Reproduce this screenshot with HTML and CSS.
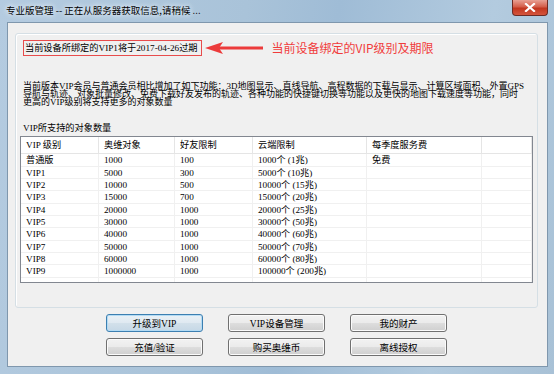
FILE: index.html
```html
<!DOCTYPE html>
<html>
<head>
	<title>专业版管理</title>
	<link rel="stylesheet" href="styles.css">
</head>
<body>
	<div class="window">
		<div class="titlebar">
			<span class="title">专业版管理 -- 正在从服务器获取信息,请稍候 ...</span>
			<div class="close">
				<svg width="12" height="9" viewBox="0 0 12 9"><path d="M2 1 L10 8 M10 1 L2 8" stroke="#fff" stroke-width="2.2" stroke-linecap="square"/></svg>
			</div>
		</div>
		<div class="client">
			<div class="group">
				<div class="notice-row">
					<div class="expiry">当前设备所绑定的VIP1将于2017-04-26过期</div>
					<svg class="arrow" width="60" height="14" viewBox="0 0 60 14">
						<path d="M14 5.6 L59 5.6 L59 8.4 L14 8.4 Z" fill="#ec3b3b"/>
						<path d="M1 7 L19 1 L15 7 L19 13 Z" fill="#ec3b3b"/>
					</svg>
					<span class="callout">当前设备绑定的VIP级别及期限</span>
				</div>
				<p class="features">
					<span>当前版本VIP会员与普通会员相比增加了如下功能：3D地图显示、直线导航、高程数据的下载与显示、计算区域面积、外置GPS</span>
					<span>导航与轨迹、对象批量修改、免费下载好友发布的轨迹、各种功能的快捷键切换等功能以及更快的地图下载速度等功能，同时</span>
					<span>更高的VIP级别将支持更多的对象数量</span>
				</p>
				<div class="caption">VIP所支持的对象数量</div>
				<div class="listview">
					<div class="row head">
						<div>VIP 级别</div><div>奥维对象</div><div>好友限制</div><div>云端限制</div><div>每季度服务费</div><div></div>
					</div>
					<div class="row"><div>普通版</div><div>1000</div><div>100</div><div>1000个 (1兆)</div><div>免费</div><div></div></div>
					<div class="row"><div>VIP1</div><div>5000</div><div>300</div><div>5000个 (10兆)</div><div></div><div></div></div>
					<div class="row"><div>VIP2</div><div>10000</div><div>500</div><div>10000个 (15兆)</div><div></div><div></div></div>
					<div class="row"><div>VIP3</div><div>15000</div><div>700</div><div>15000个 (20兆)</div><div></div><div></div></div>
					<div class="row"><div>VIP4</div><div>20000</div><div>1000</div><div>20000个 (25兆)</div><div></div><div></div></div>
					<div class="row"><div>VIP5</div><div>30000</div><div>1000</div><div>30000个 (50兆)</div><div></div><div></div></div>
					<div class="row"><div>VIP6</div><div>40000</div><div>1000</div><div>40000个 (60兆)</div><div></div><div></div></div>
					<div class="row"><div>VIP7</div><div>50000</div><div>1000</div><div>50000个 (70兆)</div><div></div><div></div></div>
					<div class="row"><div>VIP8</div><div>60000</div><div>1000</div><div>60000个 (80兆)</div><div></div><div></div></div>
					<div class="row"><div>VIP9</div><div>1000000</div><div>1000</div><div>100000个 (200兆)</div><div></div><div></div></div>
					<div class="row blank"><div></div><div></div><div></div><div></div><div></div><div></div></div>
				</div>
			</div>
			<div class="buttons">
				<button class="default">升级到VIP</button>
				<button>VIP设备管理</button>
				<button>我的财产</button>
				<button>充值/验证</button>
				<button>购买奥维币</button>
				<button>离线授权</button>
			</div>
		</div>
	</div>
</body>
</html>
```
FILE: styles.css
```css
body {
	margin: 0;
	font-family: "Liberation Serif", "Noto Sans CJK SC", serif;
	font-size: 9.2px;
	color: #000;
}

.window {
	width: 554px;
	height: 374px;
	box-sizing: border-box;
	padding: 0 6px 7px 7px;
	background: linear-gradient(100deg, #b4cbe0 0%, #a9c3d9 40%, #9fbcd6 55%, #b3cbdf 80%, #a8c1d6 100%);
	display: flex;
	flex-direction: column;
}

.titlebar {
	height: 22px;
	display: flex;
	align-items: flex-start;
	justify-content: space-between;
	margin-left: -1px;
}

.title {
	font-family: "Noto Sans CJK SC", sans-serif;
	font-size: 9.5px;
	line-height: 12px;
	margin-top: 4px;
	text-shadow: 0 0 4px #e8f0f8, 0 0 6px #e8f0f8;
}

.close {
	width: 36px;
	height: 16px;
	box-sizing: border-box;
	border: 1px solid #6d2b24;
	border-top: none;
	border-radius: 0 0 4px 4px;
	background: linear-gradient(#e8a093 0%, #d45e4a 45%, #c2361f 55%, #d4553c 100%);
	display: flex;
	align-items: center;
	justify-content: center;
}

.client {
	flex: 1;
	background: #f0f0f0;
	border: 1px solid #7f97ad;
	padding-top: 10px;
}

.group {
	height: 275px;
	box-sizing: border-box;
	margin: 0 9px 0 7px;
	border: 1px solid #d5dfe5;
	border-radius: 3px;
	box-shadow: inset 1px 1px 0 #fff;
	padding: 6px 4px 0 4px;
}

.notice-row {
	display: flex;
	align-items: center;
	margin-left: 3px;
}

.expiry {
	height: 16px;
	box-sizing: border-box;
	border: 1px solid #e84c4c;
	padding: 0 3px 0 1px;
	line-height: 14px;
	white-space: nowrap;
}

.arrow {
	margin-left: 2px;
}

.callout {
	margin-left: 8px;
	font-family: "Noto Sans CJK SC", sans-serif;
	font-size: 12px;
	line-height: 16px;
	color: #f03c3c;
}

.features {
	margin: 27px 0 0 3px;
	font-size: 9px;
	line-height: 7.8px;
	white-space: nowrap;
}

.features span {
	display: block;
	height: 7.8px;
}

.caption {
	margin: 16px 0 0 3px;
	line-height: 12px;
}

.listview {
	margin-top: 2px;
	height: 147px;
	box-sizing: border-box;
	border: 1px solid #828790;
	background: #fff;
	overflow: hidden;
}

.row {
	display: grid;
	grid-template-columns: 78px 76px 78px 114px 115px 1fr;
	height: 12.33px;
	line-height: 12.33px;
	border-bottom: 1px solid #f0f0f0;
	box-sizing: border-box;
}

.row div {
	padding-left: 5px;
	border-right: 1px solid #f0f0f0;
	white-space: nowrap;
	overflow: hidden;
}

.row.head {
	height: 17px;
	line-height: 17px;
	border-bottom: 1px solid #e5e5e5;
	background: #fff;
}

.row.head div {
	border-right: 1px solid #e5e5e5;
}

.row.blank {
	border-bottom: none;
}

.buttons {
	display: grid;
	grid-template-columns: repeat(3, 97px);
	grid-auto-rows: 18px;
	column-gap: 25px;
	row-gap: 6px;
	margin: 6px 0 0 98px;
}

.buttons button {
	font-family: "Liberation Serif", "Noto Sans CJK SC", serif;
	font-size: 9.5px;
	padding: 0;
	border: 1px solid #707070;
	border-radius: 3px;
	background: linear-gradient(#f2f2f2 0%, #ebebeb 48%, #dddddd 52%, #cfcfcf 100%);
	box-shadow: inset 0 0 0 1px #fbfbfb;
	color: #000;
}

.buttons button.default {
	border-color: #3c7fb1;
	background: linear-gradient(#eaf1f6 0%, #dfe9f1 48%, #d2e0ea 52%, #c6d8e6 100%);
	box-shadow: inset 0 0 0 1px #b3dbf4;
}
```
